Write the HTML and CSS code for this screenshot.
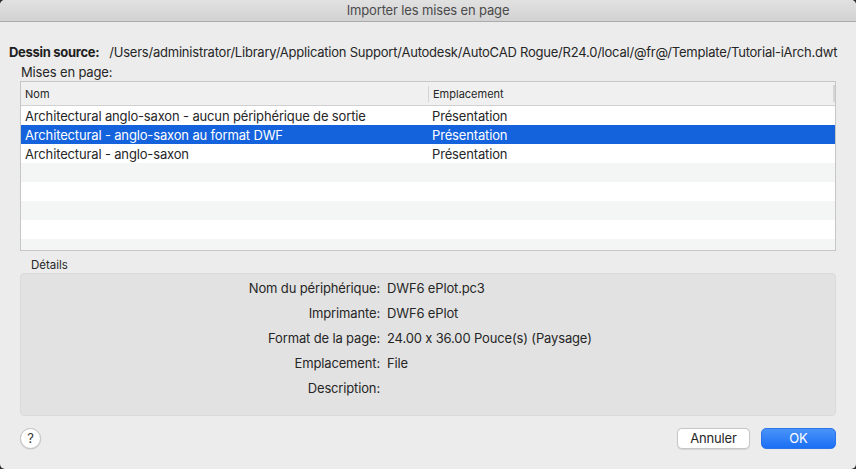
FILE: index.html
```html
<!DOCTYPE html>
<html lang="fr">
<head>
<meta charset="utf-8">
<title>Importer les mises en page</title>
<link rel="stylesheet" href="styles.css">
</head>
<body>
<div class="window">
  <div class="titlebar">Importer les mises en page</div>
  <div class="content">
    <div class="source"><span class="source-label">Dessin source:</span><span class="source-path">/Users/administrator/Library/Application Support/Autodesk/AutoCAD Rogue/R24.0/local/@fr@/Template/Tutorial-iArch.dwt</span></div>
    <div class="section-label">Mises en page:</div>
    <div class="table">
      <div class="thead">
        <div class="th col-name">Nom</div>
        <div class="th col-loc">Emplacement</div>
        <div class="th-end"></div>
      </div>
      <div class="tbody">
        <div class="row"><div class="cell col-name">Architectural anglo-saxon - aucun périphérique de sortie</div><div class="cell col-loc">Présentation</div></div>
        <div class="row selected"><div class="cell col-name">Architectural - anglo-saxon au format DWF</div><div class="cell col-loc">Présentation</div></div>
        <div class="row"><div class="cell col-name">Architectural - anglo-saxon</div><div class="cell col-loc">Présentation</div></div>
        <div class="row alt"></div>
        <div class="row"></div>
        <div class="row alt"></div>
        <div class="row"></div>
        <div class="row alt"></div>
      </div>
    </div>
    <div class="details-label">Détails</div>
    <div class="details">
      <div class="d-key">Nom du périphérique:</div><div class="d-val">DWF6 ePlot.pc3</div>
      <div class="d-key">Imprimante:</div><div class="d-val">DWF6 ePlot</div>
      <div class="d-key">Format de la page:</div><div class="d-val">24.00 x 36.00 Pouce(s) (Paysage)</div>
      <div class="d-key">Emplacement:</div><div class="d-val">File</div>
      <div class="d-key">Description:</div><div class="d-val"></div>
    </div>
    <div class="footer">
      <div class="help">?</div>
      <div class="buttons">
        <div class="btn btn-cancel">Annuler</div>
        <div class="btn btn-ok">OK</div>
      </div>
    </div>
  </div>
</div>
</body>
</html>
```

FILE: styles.css
```css
* { box-sizing: border-box; }
html, body {
  margin: 0;
  padding: 0;
  background: #2b2b2b;
}
body {
  font-family: Inter, "Liberation Sans", sans-serif;
  font-size: 13px;
  letter-spacing: -0.15px;
  font-feature-settings: "calt" 0;
  color: #262626;
}
.window {
  width: 856px;
  height: 469px;
  background: #ececec;
  border-radius: 5px;
  overflow: hidden;
  display: flex;
  flex-direction: column;
}
.titlebar {
  height: 22px;
  line-height: 21px;
  text-align: center;
  color: #4a4a4a;
  font-size: 13px;
  background: linear-gradient(#e1e1e1, #d2d2d2);
  border-bottom: 1px solid #acacac;
}
.content {
  padding: 0 20px;
  display: flex;
  flex-direction: column;
}
.source {
  margin: 22px -11px 0;
  height: 16px;
  line-height: 16px;
  white-space: nowrap;
  display: flex;
  gap: 10px;
}
.source-label {
  font-weight: 700;
  letter-spacing: -0.3px;
  color: #1e1e1e;
}
.source-path { letter-spacing: -0.22px; }
.section-label {
  margin: 4px 0 0 1px;
  height: 16px;
  line-height: 16px;
}
.table {
  margin-top: 1px;
  height: 170px;
  border: 1px solid #c6c6c6;
  background: #ffffff;
  overflow: hidden;
}
.thead {
  height: 24px;
  background: #f0f0f0;
  border-bottom: 1px solid #d0d0d0;
  display: flex;
  align-items: center;
  font-size: 11px;
  letter-spacing: 0;
}
.th { height: 100%; display: flex; align-items: center; }
.col-name { width: 407px; padding-left: 4px; flex: none; }
.col-loc { flex: 1; padding-left: 4px; }
.thead .col-loc { border-left: 1px solid #d4d4d4; height: 16px; }
.th-end { width: 2px; height: 17px; background: #d6d6d6; }
.row {
  height: 19px;
  line-height: 20px;
  display: flex;
  white-space: nowrap;
}
.row.alt { background: #f4f5f5; }
.row.selected { background: #1463dd; color: #ffffff; }
.details-label {
  margin: 7px 0 0 11px;
  height: 15px;
  line-height: 15px;
  font-size: 11.5px;
  letter-spacing: 0;
}
.details {
  height: 143px;
  background: #e2e2e2;
  border: 1px solid #dadada;
  border-radius: 4px;
  padding-top: 2px;
  display: grid;
  grid-template-columns: 359px 1fr;
  column-gap: 7px;
  grid-auto-rows: 24.8px;
  align-content: start;
  align-items: center;
}
.d-key { text-align: right; }
.footer {
  margin-top: 12px;
  display: flex;
  justify-content: space-between;
  align-items: center;
}
.help {
  width: 21px;
  height: 21px;
  border-radius: 50%;
  background: #ffffff;
  border: 1px solid #c3c3c3;
  box-shadow: 0 0.5px 1px rgba(0,0,0,0.15);
  text-align: center;
  line-height: 19px;
  font-size: 13px;
  color: #333;
}
.buttons { display: flex; gap: 11px; }
.btn {
  height: 21px;
  line-height: 19px;
  border-radius: 5px;
  text-align: center;
}
.btn-cancel {
  width: 73px;
  background: #ffffff;
  border: 1px solid #c6c6c6;
  box-shadow: 0 0.5px 1px rgba(0,0,0,0.1);
}
.btn-ok {
  width: 75px;
  color: #ffffff;
  background: linear-gradient(#4a93f9, #1b6ff4);
  border: 1px solid #2a74ea;
}
```
